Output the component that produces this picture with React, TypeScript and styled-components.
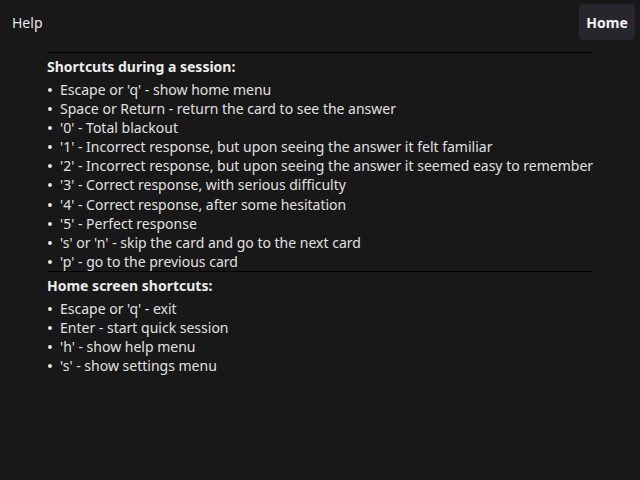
import React from 'react'
import styled, { createGlobalStyle } from 'styled-components'

const sessionShortcuts = [
  "Escape or 'q' - show home menu",
  'Space or Return - return the card to see the answer',
  "'0' - Total blackout",
  "'1' - Incorrect response, but upon seeing the answer it felt familiar",
  "'2' - Incorrect response, but upon seeing the answer it seemed easy to remember",
  "'3' - Correct response, with serious difficulty",
  "'4' - Correct response, after some hesitation",
  "'5' - Perfect response",
  "'s' or 'n' - skip the card and go to the next card",
  "'p' - go to the previous card",
]

const homeShortcuts = [
  "Escape or 'q' - exit",
  'Enter - start quick session',
  "'h' - show help menu",
  "'s' - show settings menu",
]

export default function App() {
  return (
    <>
      <GlobalStyle />
      <Page>
        <Header>
          <Title>Help</Title>
          <HomeButton>Home</HomeButton>
        </Header>
        <Content>
          <Section>
            <Heading>Shortcuts during a session:</Heading>
            <List>
              {sessionShortcuts.map((s) => (
                <Item key={s}>{s}</Item>
              ))}
            </List>
          </Section>
          <Section>
            <Heading>Home screen shortcuts:</Heading>
            <List>
              {homeShortcuts.map((s) => (
                <Item key={s}>{s}</Item>
              ))}
            </List>
          </Section>
        </Content>
      </Page>
    </>
  )
}

const GlobalStyle = createGlobalStyle`
  html, body {
    margin: 0;
    padding: 0;
    background: #181818;
  }
  body {
    font-family: 'Noto Sans', 'Open Sans', sans-serif;
    font-size: 14px;
    color: #e2e2e2;
  }
`

const Page = styled.div`
  width: 640px;
  height: 480px;
  background: #181818;
`

const Header = styled.div`
  display: flex;
  align-items: center;
  justify-content: space-between;
  height: 44px;
  padding: 0 5px 0 12px;
  box-sizing: border-box;
`

const Title = styled.span`
  font-size: 14px;
  color: #e6e6e6;
`

const HomeButton = styled.button`
  height: 36px;
  width: 56px;
  border: none;
  border-radius: 4px;
  background: #26272c;
  color: #f2f2f2;
  font-family: 'Noto Sans', 'Open Sans', sans-serif;
  font-size: 14px;
  font-weight: 700;
  padding: 0;
`

const Content = styled.div`
  width: 546px;
  margin: 8px auto 0;
`

const Section = styled.div`
  border-top: 1px solid #000;
  padding-top: 4px;
`

const Heading = styled.div`
  font-weight: 700;
  line-height: 19px;
  margin-bottom: 4px;
  color: #ececec;
`

const List = styled.ul`
  margin: 0;
  padding: 0 0 0 13px;
  list-style: none;
`

const Item = styled.li`
  position: relative;
  line-height: 19.1px;
  color: #e0e0e0;
  white-space: nowrap;

  &::before {
    content: '';
    position: absolute;
    left: -12.5px;
    top: 8px;
    width: 4px;
    height: 4px;
    border-radius: 50%;
    background: #e8e8e8;
  }
`
